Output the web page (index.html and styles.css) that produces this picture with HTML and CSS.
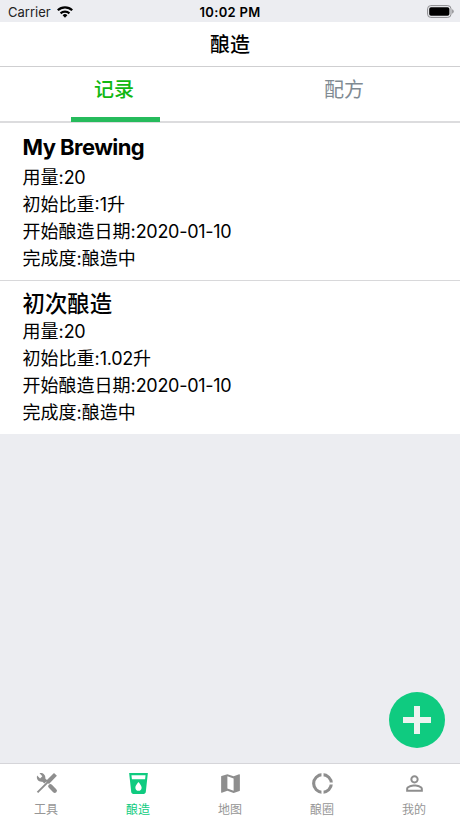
FILE: index.html
```html
<!DOCTYPE html>
<html lang="zh-CN">
<head>
<meta charset="utf-8">
<title>酿造</title>
<link rel="stylesheet" href="styles.css">
</head>
<body>
<div class="app">
  <div class="status">
    <div class="carrier"><span>Carrier</span>
      <svg class="wifi" viewBox="0 0 16 12"><path d="M8 11.8 5.6 9.2a3.5 3.5 0 0 1 4.800 0z"/><g fill="none" stroke="#000" stroke-width="2.200"><path d="M3.600 7.400a6.300 6.300 0 0 1 8.800 0"/><path d="M.8 4.300a10.200 10.200 0 0 1 14.400 0"/></g></svg>
    </div>
    <div class="time">10:02 PM</div>
    <svg class="battery" viewBox="0 0 27 13"><rect x=".6" y=".6" width="23.4" height="11.8" rx="3.2" fill="none" stroke="#8b8b8e"/><rect x="2.2" y="2.2" width="20.2" height="8.6" rx="1.8"/><path d="M25.2 4.3q1.5.6 1.5 2.2t-1.5 2.2z" fill="#8b8b8e"/></svg>
  </div>
  <header class="header">酿造</header>
  <nav class="tabs">
    <div class="tab active"><span>记录</span></div>
    <div class="tab"><span>配方</span></div>
  </nav>
  <main class="content">
    <section class="item">
      <h2 class="latin">My Brewing</h2>
      <p>用量:<span class="num">20</span></p>
      <p>初始比重:1升</p>
      <p>开始酿造日期:<span class="num">2020-01-10</span></p>
      <p>完成度:酿造中</p>
    </section>
    <section class="item">
      <h2>初次酿造</h2>
      <p>用量:<span class="num">20</span></p>
      <p>初始比重:<span class="num">1.02</span>升</p>
      <p>开始酿造日期:<span class="num">2020-01-10</span></p>
      <p>完成度:酿造中</p>
    </section>
    <div class="fab"><svg viewBox="0 0 28 28"><path d="M11 0h6v11h11v6H17v11h-6V17H0v-6h11z"/></svg></div>
  </main>
  <footer class="bar">
    <div class="link"><svg viewBox="0 0 24 24"><path d="M3 4.300 5.800 7.100 8 5 5.300 2.200C7.800 1.400 11.300 3.200 10.900 7.200L12.900 9.200 10 12.100 8 10.200C4.800 10.800 1.800 8 3 4.300z"/><path d="M19.200 1.800 22 4.600 14.600 12.200 13.200 12 4 21.200 2.700 19.900 11.900 10.700 11.700 9.300z"/><path d="M15.700 14.700l4.200 4.200" fill="none" stroke="#8e8e8e" stroke-width="4.200" stroke-linecap="round"/></svg><span>工具</span></div>
    <div class="link on"><svg viewBox="0 0 24 24"><path d="M3 2l2.010 18.230C5.130 21.230 5.970 22 7 22h10c1.030 0 1.870-.77 1.990-1.770L21 2H3zm9 17c-1.660 0-3-1.340-3-3 0-2 3-5.400 3-5.400s3 3.400 3 5.400c0 1.660-1.340 3-3 3zm6.330-11H5.670l-.44-4h13.530l-.43 4z"/></svg><span>酿造</span></div>
    <div class="link"><svg viewBox="0 0 24 24"><path d="M20.500 3l-.16.030L15 5.100 9 3 3.360 4.900c-.21.070-.36.250-.36.480V20.500c0 .28.220.5.5.5l.16-.03L9 18.900l6 2.100 5.640-1.900c.21-.07.36-.25.36-.48V3.500c0-.28-.22-.5-.5-.5zM15 19l-6-2.110V5l6 2.110V19z"/></svg><span>地图</span></div>
    <div class="link"><svg viewBox="0 0 24 24"><circle cx="12" cy="12" r="8.500" fill="none" stroke="#8e8e8e" stroke-width="3"/><path d="M11 1h2v6h-2zM11 17h2v6h-2zM17 11h6v2h-6z" fill="#fff"/></svg><span>酿圈</span></div>
    <div class="link"><svg viewBox="0 0 24 24"><path d="M12 5.900a2.100 2.100 0 1 1 0 4.200 2.100 2.100 0 0 1 0-4.200m0 9c2.970 0 6.100 1.460 6.100 2.100v1.100H5.900V17c0-.64 3.130-2.100 6.100-2.100M12 4C9.790 4 8 5.790 8 8s1.790 4 4 4 4-1.790 4-4-1.790-4-4-4zm0 9c-2.670 0-8 1.340-8 4v3h16v-3c0-2.660-5.330-4-8-4z"/></svg><span>我的</span></div>
  </footer>
</div>
</body>
</html>
```
FILE: styles.css
```css
* { box-sizing: border-box; margin: 0; padding: 0; }
body { font-family: Inter, "Noto Sans CJK SC", sans-serif; color: #000; }
.app { height: 818px; display: flex; flex-direction: column; background: #ecedf1; overflow: hidden; }
.status { height: 22px; display: grid; grid-template-columns: 1fr auto 1fr; align-items: center; padding: 1px 6px 0 8px; font-size: 13px; line-height: 20px; }
.carrier { display: flex; align-items: center; gap: 6px; color: #222; }
.wifi { width: 16px; height: 12px; }
.time { font-weight: 600; letter-spacing: .3px; padding-right: 2px; }
.battery { width: 27px; height: 13px; justify-self: end; }
.header { height: 45px; background: #fff; border-bottom: 1px solid #cfcfd1; text-align: center; font-size: 20px; font-weight: 500; line-height: 47px; }
.tabs { height: 56px; flex: none; display: flex; background: #fff; border-bottom: 2px solid #dcdcde; }
.tab { flex: 1; display: flex; justify-content: center; color: #808a92; font-size: 20px; line-height: 46px; height: 55px; }
.tab span { width: 89px; text-align: center; padding-right: 2px; }
.active { color: #11b811; font-weight: 500; }
.active span { border-bottom: 5px solid #26bb5c; }
.content { flex: 1; position: relative; }
.item { background: #fff; padding: 8px 22px 8px 22.500px; font-size: 18px; line-height: 27px; }
.item + .item { border-top: 1px solid #d8d8da; }
.item h2 { font-size: 22.400px; font-weight: 500; line-height: 29px; }
.item .latin { font-size: 22px; font-weight: 700; line-height: 33px; letter-spacing: -.55px; }
.num { letter-spacing: -.3px; }
.fab { position: absolute; right: 15px; bottom: 15px; width: 56px; height: 56px; border-radius: 50%; background: #0fcb80; display: flex; align-items: center; justify-content: center; }
.fab svg { width: 28px; height: 28px; fill: #ecf3f0; }
.bar { height: 55px; flex: none; display: flex; background: #fff; border-top: 1px solid #d5d5d9; }
.link { flex: 1; display: flex; flex-direction: column; align-items: center; padding-top: 7px; color: #969696; font-size: 12px; line-height: 18px; }
.link svg { flex: none; width: 25px; height: 25px; fill: #8e8e8e; margin-bottom: 5px; }
.on { color: #0fcb80; }
.link.on svg { fill: #0fcb80; }
```
